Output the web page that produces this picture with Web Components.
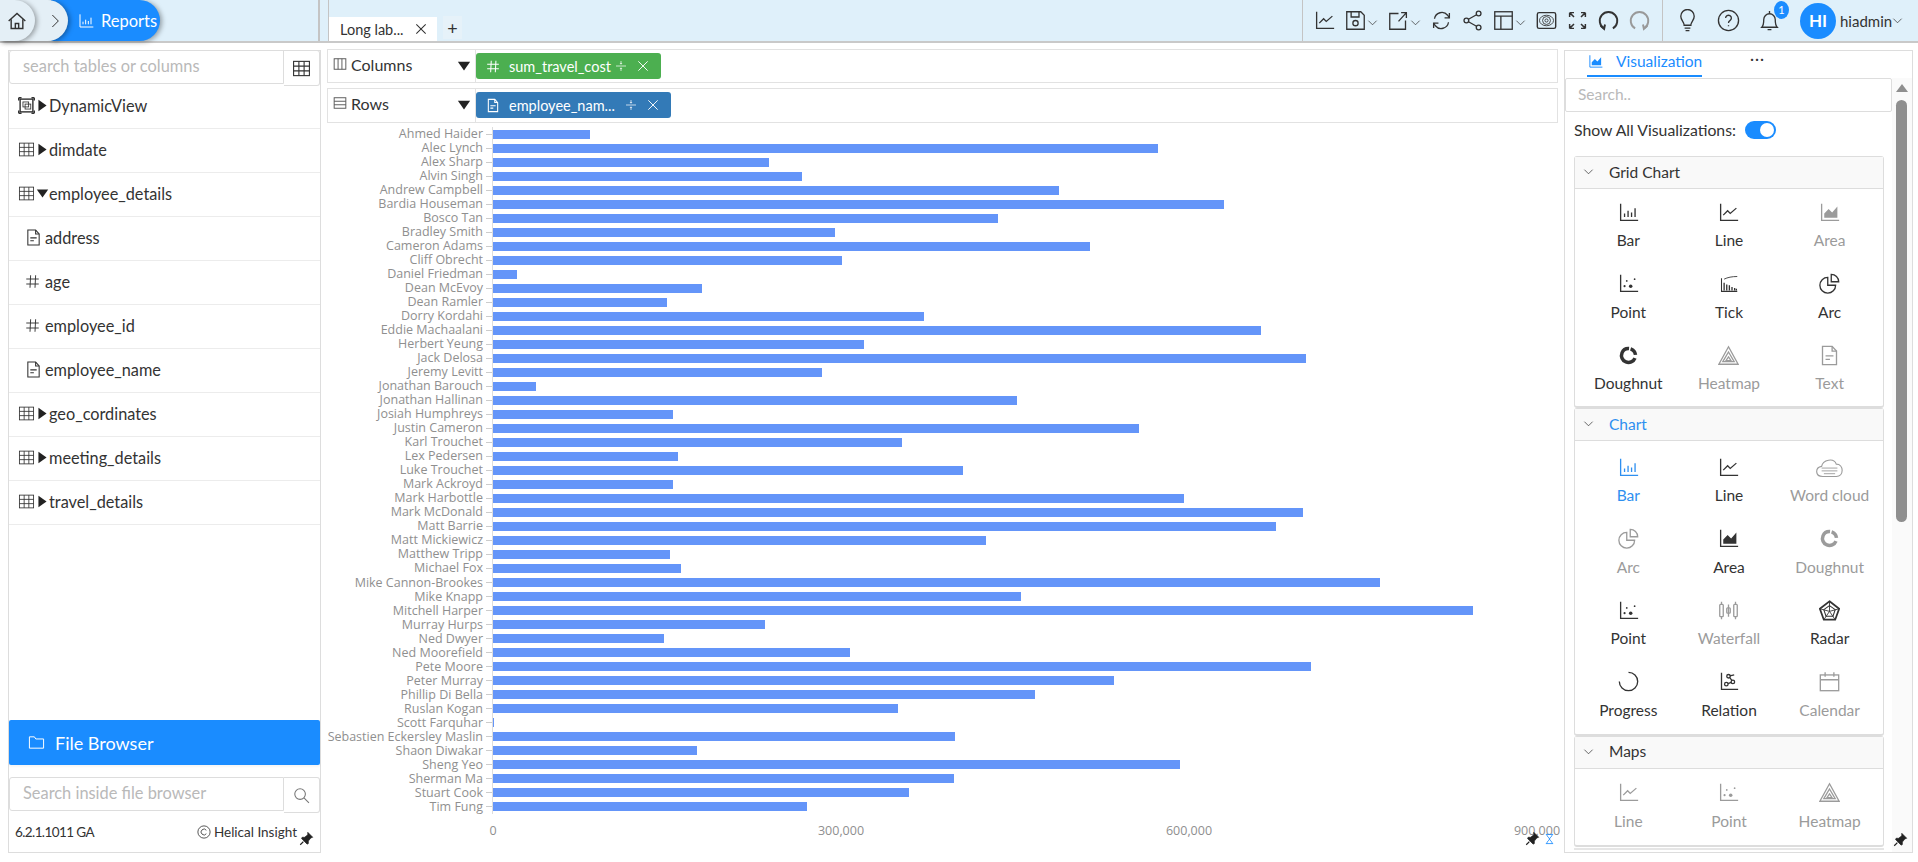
<!DOCTYPE html>
<html lang="en">
<head>
<meta charset="utf-8">
<title>Reports</title>
<style>
  html, body { margin: 0; height: 100%; overflow: hidden; background: #fff; }
  body { font-family: "Lato", "Liberation Sans", sans-serif; color: #333; }
  .shell { display: flex; flex-direction: column; height: 862px; }
  .main { flex: 1; min-height: 0; display: flex; padding: 7px 5px 9px 8px; }
</style>
</head>
<body>
<div class="shell">
  <hi-topbar></hi-topbar>
  <div class="main">
    <field-panel></field-panel>
    <report-canvas></report-canvas>
    <viz-panel></viz-panel>
  </div>
</div>

<script>
const ICONS = {
  home: '<path d="M2 12 12 3l10 9"/><path d="M5 10v11h14V10"/><path d="M10 21v-6h4v6"/>',
  bars: '<path d="M3 2v19h20"/><path d="M7.5 17v-4M11.5 17v-7M15.5 17V12M19.5 17V7"/>',
  line: '<path d="M3 2v19h20"/><path d="M6 15l5-5 3 3 7-6" />',
  area: '<path d="M3 2v19h20"/><path d="M6 18v-5l5-5 4 4 6-7v13z" fill="currentColor" stroke="none"/>',
  point: '<path d="M3 2v19h20"/><circle cx="7.500" cy="15" r="1.200" fill="currentColor" stroke="none"/><circle cx="10" cy="9" r="1" fill="currentColor" stroke="none"/><circle cx="14.500" cy="15" r="2" fill="currentColor" stroke="none"/><circle cx="19" cy="7" r="1" fill="currentColor" stroke="none"/>',
  tick: '<path d="M4 6v15h18" stroke-width="1.200"/><path d="M7 20v-9M10 20v-7M13 20v-6M16 20v-4M19 20v-3M21 20v-2" stroke-width="1.500"/><path d="M7 7c4-2 9-3 15-3" stroke-width="1"/>',
  arc: '<path d="M10 5a9 9 0 1 0 9 9h-9z"/><path d="M14 1.500a8.500 8.500 0 0 1 8.500 8.500H14z"/>',
  doughnut: '<circle cx="12" cy="12" r="8" fill="none" stroke-width="4" stroke-dasharray="35 1.800 9.500 3.900" transform="rotate(22 12 12)"/>',
  heatmap: '<path d="M12 2 23 22H1z"/><path d="M12 8l6.500 11h-13z"/><path d="M12 13.500l3 4.500H9z"/>',
  text: '<path d="M4 1.500h11l5 5.500v15.500H4z"/><path d="M15 1.500V7h5"/><path d="M7.500 12.500h9M7.500 16.500h5"/>',
  cloud: '<path d="M6 20c-7 0-7-8-1-9 1-6 11-8 13-2 7 0 7 11 0 11z" stroke-width="1"/><path d="M5 12.500h14M5 15h14M7 17.500h10" stroke-width=".8"/>',
  waterfall: '<rect x="2" y="5" width="4" height="14" rx="1"/><path d="M4 2v3M4 19v3M12 5v14M20 2v3M20 19v3"/><rect x="10" y="9" width="4" height="6" rx="1"/><rect x="18" y="5" width="4" height="14" rx="1"/>',
  radar: '<path d="M12 1.500 23 10l-4.500 12.500h-13L1 10z" stroke-width="2"/><path d="M12 6.500 18.500 11l-2.500 7.500H8L5.500 11z" stroke-width="1.200"/><path d="M12 1.500V13M1 10l11 3 11-3M5.500 22.500 12 13l6.500 9.500" stroke-width="1"/>',
  progress: '<path d="M12 1.500a10.500 10.500 0 1 1-10.500 10.500"/>',
  relation: '<path d="M4 2v19h19"/><circle cx="9.500" cy="15" r="2"/><circle cx="17" cy="12.500" r="2"/><circle cx="12" cy="6" r="2"/><path d="M11.500 14.500l3.500-1.500M13.500 7.500l2.500 3.500M13.500 5.500l5-1" />',
  calendar: '<rect x="1.500" y="4.500" width="21" height="18"/><path d="M1.500 10h21M7 1.500v5M17 1.500v5"/>',
  table: '<rect x="2" y="3" width="20" height="18"/><path d="M2 9h20M2 15h20M8.700 3v18M15.300 3v18"/>',
  dynamic: '<rect x="3" y="3" width="18" height="18" stroke-width="2"/><rect x="7" y="7" width="8" height="7"/><rect x="10" y="10" width="8" height="7"/><path d="M1 1h4M1 1v4M23 1h-4M23 1v4M1 23h4M1 23v-4M23 23h-4M23 23v-4" stroke-width="2"/>',
  hash: '<path d="M9 2 8 22M17 2l-1 20M2 8h20M2 16h20"/>',
  columns: '<rect x="2" y="3" width="20" height="18"/><path d="M8.700 3v18M15.300 3v18"/>',
  rows: '<rect x="2" y="3" width="20" height="18"/><path d="M2 9h20M2 15h20"/>',
  folder: '<path d="M2 20V4h7l2 3h11v13z"/>',
  search: '<circle cx="10" cy="10" r="7.500"/><path d="M15.500 15.500 22.500 22.500"/>',
  split: '<path d="M2 12h20"/><path d="M12 2v6M12 16v6"/><path d="M10 6l2 2.500L14 6M10 18l2-2.500 2 2.500"/>',
  close: '<path d="M4 4l16 16M20 4 4 20"/>',
  chevron: '<path d="M3 8l9 9 9-9"/>',
  pin: '<path d="M14 2l8 8-3 1-4 5 0 4-2 1-9-9 1-2 4 0 5-4z" fill="currentColor"/><path d="M7 17l-5 5" stroke-width="2"/>',
  glass: '<path d="M4 2h16M4 22h16"/><path d="M6 2c0 5 6 7 6 10 0-3 6-5 6-10M6 22c0-5 6-7 6-10 0 3 6 5 6 10"/>',
  save: '<path d="M2 2h16l4 4v16H2z"/><path d="M7 2v6h9V2"/><circle cx="12" cy="15" r="3"/>',
  share2: '<path d="M12 4H2v18h18V12"/><path d="M12 13 21 3M15 3h6v6"/>',
  refresh: '<path d="M4 10a8.500 8.500 0 0 1 15-4l2 3"/><path d="M21 3.500V9h-5.500"/><path d="M20 14a8.500 8.500 0 0 1-15 4l-2-3"/><path d="M3 20.500V15h5.500"/>',
  share: '<circle cx="19" cy="4" r="2.700"/><circle cx="19" cy="20" r="2.700"/><circle cx="5" cy="12" r="2.700"/><path d="M7.400 10.600 16.600 5.400M7.400 13.400l9.200 5.200"/>',
  layout: '<rect x="2" y="2" width="20" height="20"/><path d="M2 7h20M9 7v15"/>',
  eye: '<rect x="1.500" y="3" width="21" height="18" rx="2" stroke-width="1.600"/><ellipse cx="12" cy="12" rx="8" ry="6" stroke-width="1"/><ellipse cx="12" cy="12" rx="4.500" ry="4.500" stroke-width="1"/><circle cx="12" cy="12" r="1.800" stroke-width="1"/>',
  expand: '<path d="M3 3l5 5M3 3v5M3 3h5M21 3l-5 5M21 3v5M21 3h-5M3 21l5-5M3 21v-5M3 21h5M21 21l-5-5M21 21v-5M21 21h-5" stroke-width="1.700"/>',
  undo: '<path d="M7 21a10 10 0 1 1 10 0" stroke-width="2.200"/><path d="M3 18l4 3.500 1-5" stroke-width="2.200"/>',
  redo: '<path d="M7 21a10 10 0 1 1 10 0" stroke-width="2.200"/><path d="M21 18l-4 3.500-1-5" stroke-width="2.200"/>',
  bulb: '<path d="M8.500 17c0-4-3.500-5-3.500-9.500a7 7 0 0 1 14 0C19 12 15.500 13 15.500 17z"/><path d="M9 20h6M10 22.500h4"/>',
  bell: '<path d="M4 19c2-2 2-4 2-8a6 6 0 0 1 12 0c0 4 0 6 2 8z"/><path d="M10 21.500h4M12 2v3"/>',
  help: '<circle cx="12" cy="12" r="10.500"/><path d="M9 9.500a3 3 0 1 1 4.500 2.600c-1 .6-1.500 1.200-1.500 2.400M12 17v1"/>',
  copyright: '<circle cx="12" cy="12" r="10.500"/><path d="M16 9a5 5 0 1 0 0 6"/>'
};

function icon(name, w, h, sw) {
  return `<svg viewBox="0 0 24 24" width="${w}" height="${h || w}" fill="none" stroke="currentColor" stroke-width="${sw || 1.5}" style="display:block;flex:none" aria-hidden="true">${ICONS[name]}</svg>`;
}

function caret(dir, size) {
  const d = dir === "down" ? "M1 3h14L8 13z" : "M3 1v14l10-7z";
  return `<svg viewBox="0 0 16 16" width="${size}" height="${size}" fill="#222" style="display:block;flex:none" aria-hidden="true"><path d="${d}"/></svg>`;
}

class HiTopbar extends HTMLElement {
  constructor() { super(); this.attachShadow({ mode: "open" }); }
  connectedCallback() {
    const tool = (name, chev, cls) => `<span class="tool ${cls || ""}">${icon(name, 21)}${chev ? `<span class="chev">${icon("chevron", 11, 11, 1.6)}</span>` : ""}</span>`;
    this.shadowRoot.innerHTML = `
      <style>
        :host { display: flex; flex: none; height: 41px; background: #dff0fa; border-bottom: 2px solid #c9c9c9; color: #333; }
        .crumbs { width: 320px; box-sizing: border-box; display: flex; flex: none; height: 41px; border-right: 2px solid #c4c4c4; }
        .crumb { height: 41px; display: flex; align-items: center; box-sizing: border-box; border-radius: 0 21px 21px 0; box-shadow: 2px 1px 5px rgba(0,0,0,.35); }
        .home { width: 35px; padding-left: 7px; background: #e4eff6; position: relative; z-index: 3; border-bottom-right-radius: 21px; }
        .next { width: 68px; margin-left: -35px; padding-left: 47px; background: #e4eff6; position: relative; z-index: 2; }
        .reports { width: 109px; margin-left: -17px; padding-left: 27px; background: #1a8cff; color: #fff; gap: 7px; font-size: 16.500px; z-index: 1; position: relative; }
        .tabs { width: 974px; margin-left: 8px; box-sizing: border-box; flex: none; display: flex; align-items: flex-end; border-left: 1px solid #c4c4c4; }
        .tab { width: 108px; height: 24px; background: #fff; box-sizing: border-box; display: flex; align-items: center; padding-left: 11px; font-size: 14.500px; }
        .tab span { flex: 1; }
        .tab svg { margin-right: 9px; }
        .plus { width: 19px; height: 23px; margin: 0 0 2px 6px; display: flex; align-items: center; justify-content: center; font-size: 18px; background: #e6f2f9; line-height: 1; }
        .tools { width: 361px; box-sizing: border-box; flex: none; display: flex; align-items: center; padding: 0 0 0 11px; border-left: 1px solid #c4c4c4; border-right: 1px solid #c4c4c4; gap: 0; }
        .tool { display: flex; align-items: center; margin-right: 10px; }
        .chev { margin: 3px 0 0 1px; }
        .off { color: #999; }
        .user { flex: 1; display: flex; align-items: center; padding-left: 13px; position: relative; }
        .user .u { display: flex; margin-right: 18px; }
        .user .bell { margin-right: 19px; }
        .badge { position: absolute; left: 111px; top: 1px; width: 15px; height: 18px; border-radius: 50%; background: #1a8cff; color: #fff; font-size: 11px; line-height: 18px; text-align: center; }
        .avatar { width: 36px; height: 36px; border-radius: 50%; background: #1a8cff; color: #fff; font-size: 17px; font-weight: 700; display: flex; align-items: center; justify-content: center; flex: none; margin-right: 4px; }
        .name { font-size: 15px; }
      </style>
      <div class="crumbs">
        <div class="crumb home">${icon("home", 20, 20, 1.7)}</div>
        <div class="crumb next">${icon("chevron", 16, 16, 1.5).replace("<svg ", '<svg transform="rotate(-90)" ')}</div>
        <div class="crumb reports">${icon("bars", 16)}<span>Reports</span></div>
      </div>
      <div class="tabs">
        <div class="tab"><span>Long lab...</span>${icon("close", 14, 14, 1.8)}</div>
        <div class="plus">+</div>
      </div>
      <div class="tools">
        ${tool("line")}${tool("save", true)}${tool("share2", true)}${tool("refresh")}${tool("share")}${tool("layout", true)}${tool("eye")}${tool("expand")}${tool("undo")}${tool("redo", false, "off")}
      </div>
      <div class="user">
        <span class="u">${icon("bulb", 23, 23, 1.4)}</span>
        <span class="u">${icon("help", 23, 23, 1.4)}</span>
        <span class="u bell">${icon("bell", 23, 23, 1.4)}</span>
        <span class="badge">1</span>
        <span class="avatar">HI</span>
        <span class="name">hiadmin</span>${icon("chevron", 11, 11, 1.6)}
      </div>`;
  }
}
customElements.define("hi-topbar", HiTopbar);

class TreeRow extends HTMLElement {
  constructor() { super(); this.attachShadow({ mode: "open" }); }
  connectedCallback() {
    const kind = this.getAttribute("kind");
    const open = this.hasAttribute("open");
    const isField = kind === "text" || kind === "hash";
    const lead = isField
      ? `<span class="f">${icon(kind, kind === "hash" ? 15 : 17, 17, 1.5)}</span>`
      : `${icon(kind, 17, 17, 1.2)}<span class="c">${caret(open ? "down" : "right", 13)}</span>`;
    this.shadowRoot.innerHTML = `
      <style>
        :host { display: flex; align-items: center; height: 44px; box-sizing: border-box; border-bottom: 1px solid #ececec; font-size: 16.300px; color: #333; padding: 0 0 ${isField ? 2 : 3}px ${isField ? 16 : 9}px; }
        .f { width: 20px; flex: none; color: #444; }
        .c { width: 15px; display: flex; justify-content: center; margin-right: -1px; }
        :host svg { color: #333; }
      </style>
      ${lead}<slot></slot>`;
  }
}
customElements.define("tree-row", TreeRow);

class SearchBox extends HTMLElement {
  constructor() { super(); this.attachShadow({ mode: "open" }); }
  connectedCallback() {
    const btn = this.getAttribute("button");
    this.shadowRoot.innerHTML = `
      <style>
        :host { display: flex; height: 34px; flex: none; font-size: 16.400px; color: #b9b9b9; }
        .in { flex: 1; box-sizing: border-box; height: 34px; border: 1px solid #ddd; border-radius: 3px 0 0 3px; padding-left: 13px; line-height: 29px; }
        .btn { width: 36px; height: 36px; box-sizing: border-box; border: 1px solid #ddd; border-left: 0; border-radius: 0 3px 3px 0; display: flex; align-items: center; justify-content: center; color: #333; flex: none; }
        .btn.s { color: #777; }
      </style>
      <div class="in"><slot></slot></div>
      <div class="btn ${btn === "search" ? "s" : ""}">${btn === "search" ? icon("search", 17, 17, 1.5) : icon("table", 19, 19, 1.4)}</div>`;
  }
}
customElements.define("search-box", SearchBox);

class FieldPanel extends HTMLElement {
  constructor() { super(); this.attachShadow({ mode: "open" }); }
  connectedCallback() {
    this.shadowRoot.innerHTML = `
      <style>
        :host { display: flex; flex-direction: column; flex: none; width: 313px; box-sizing: border-box; border: 1px solid #ddd; position: relative; }
        .top { margin: -1px 0 1px; }
        .tree { flex: 1; min-height: 0; }
        .browser { height: 45px; flex: none; background: #1a8cff; color: #fff; border-radius: 2px; display: flex; align-items: center; padding-left: 19px; gap: 10px; font-size: 18px; margin-bottom: 12px; box-shadow: 0 2px 2px rgba(0,0,0,.04); }
        .foot { height: 41px; flex: none; display: flex; align-items: center; justify-content: space-between; padding: 0 23px 0 6px; font-size: 13.500px; color: #333; }
        .ver { letter-spacing: -.6px; }
        .foot .r { display: flex; align-items: center; gap: 3px; }
        .pin { position: absolute; right: 6px; bottom: 6px; color: #222; }
      </style>
      <search-box class="top" button="table">search tables or columns</search-box>
      <div class="tree">
        <tree-row kind="dynamic">DynamicView</tree-row>
        <tree-row kind="table">dimdate</tree-row>
        <tree-row kind="table" open>employee_details</tree-row>
        <tree-row kind="text">address</tree-row>
        <tree-row kind="hash">age</tree-row>
        <tree-row kind="hash">employee_id</tree-row>
        <tree-row kind="text">employee_name</tree-row>
        <tree-row kind="table">geo_cordinates</tree-row>
        <tree-row kind="table">meeting_details</tree-row>
        <tree-row kind="table">travel_details</tree-row>
      </div>
      <div class="browser">${icon("folder", 17, 17, 1.4)}<span>File Browser</span></div>
      <search-box button="search">Search inside file browser</search-box>
      <div class="foot">
        <span class="ver">6.2.1.1011 GA</span>
        <span class="r">${icon("copyright", 14, 14, 1.4)}<span>Helical Insight</span></span>
      </div>
      <span class="pin">${icon("pin", 15, 15, 1)}</span>`;
  }
}
customElements.define("field-panel", FieldPanel);

class ShelfRow extends HTMLElement {
  constructor() { super(); this.attachShadow({ mode: "open" }); }
  connectedCallback() {
    const h = this.getAttribute("h");
    this.shadowRoot.innerHTML = `
      <style>
        :host { display: flex; height: ${h}px; box-sizing: border-box; border: 1px solid #e2e2e2; flex: none; }
        .label { width: 148px; flex: none; box-sizing: border-box; display: flex; align-items: flex-start; padding: 6px 0 0 5px; border-right: 1px solid #e2e2e2; font-size: 16px; color: #333; }
        .label svg { color: #555; margin-right: 4px; margin-top: 1px; }
        .label span { flex: 1; line-height: 18px; }
        .car { margin-top: 2px; }
        .items { display: flex; padding: 3px 0 0 0; }
      </style>
      <div class="label">${icon(this.getAttribute("icon"), 14, 14, 1.6)}<span>${this.getAttribute("label")}</span><i class="car">${caret("down", 14)}</i></div>
      <div class="items"><slot></slot></div>`;
  }
}
customElements.define("shelf-row", ShelfRow);

class FieldPill extends HTMLElement {
  constructor() { super(); this.attachShadow({ mode: "open" }); }
  connectedCallback() {
    this.shadowRoot.innerHTML = `
      <style>
        :host { display: flex; align-items: center; box-sizing: border-box; height: 26px; width: ${this.getAttribute("w")}px; border-radius: 3px; background: ${this.getAttribute("color")}; color: #fff; padding-left: 10px; font-size: 14.500px; }
        span { flex: 1; margin-left: 9px; white-space: nowrap; }
        .a { margin-right: 9px; }
        .b { margin-right: 11px; }
      </style>
      ${icon(this.getAttribute("icon"), 14, 15, 1.8)}<span><slot></slot></span>
      <i class="a">${icon("split", 12, 14, 1.4)}</i><i class="b">${icon("close", 14, 14, 1.6)}</i>`;
  }
}
customElements.define("field-pill", FieldPill);

// plotted bar length in px, 348px = 300,000
const travelCost = [
  ["Ahmed Haider", 97], ["Alec Lynch", 665], ["Alex Sharp", 276], ["Alvin Singh", 309], ["Andrew Campbell", 566],
  ["Bardia Houseman", 731], ["Bosco Tan", 505], ["Bradley Smith", 342], ["Cameron Adams", 597], ["Cliff Obrecht", 349],
  ["Daniel Friedman", 24], ["Dean McEvoy", 209], ["Dean Ramler", 174], ["Dorry Kordahi", 431], ["Eddie Machaalani", 768],
  ["Herbert Yeung", 371], ["Jack Delosa", 813], ["Jeremy Levitt", 329], ["Jonathan Barouch", 43], ["Jonathan Hallinan", 524],
  ["Josiah Humphreys", 180], ["Justin Cameron", 646], ["Karl Trouchet", 409], ["Lex Pedersen", 185], ["Luke Trouchet", 470],
  ["Mark Ackroyd", 180], ["Mark Harbottle", 691], ["Mark McDonald", 810], ["Matt Barrie", 783], ["Matt Mickiewicz", 493],
  ["Matthew Tripp", 177], ["Michael Fox", 188], ["Mike Cannon-Brookes", 887], ["Mike Knapp", 528], ["Mitchell Harper", 980],
  ["Murray Hurps", 272], ["Ned Dwyer", 171], ["Ned Moorefield", 357], ["Pete Moore", 818], ["Peter Murray", 621],
  ["Phillip Di Bella", 542], ["Ruslan Kogan", 405], ["Scott Farquhar", 1], ["Sebastien Eckersley Maslin", 462], ["Shaon Diwakar", 204],
  ["Sheng Yeo", 687], ["Sherman Ma", 461], ["Stuart Cook", 416], ["Tim Fung", 314]
];

class BarChart extends HTMLElement {
  constructor() { super(); this.attachShadow({ mode: "open" }); }
  connectedCallback() {
    const rows = travelCost.map(([name, w]) => `
      <div class="row"><span class="n">${name}</span><i class="t"></i><i class="bar" style="width:${w}px"></i></div>`).join("");
    this.shadowRoot.innerHTML = `
      <style>
        :host { display: block; flex: 1; margin-top: -1px; font-family: "Open Sans", "Liberation Sans", sans-serif; font-size: 12.500px; color: #8f8f8f; position: relative; }
        .rows { display: grid; grid-auto-rows: 14.020px; }
        .row { display: flex; align-items: center; height: 14.020px; white-space: nowrap; }
        .n { width: 156px; text-align: right; flex: none; line-height: 14px; }
        .t { width: 6px; height: 1px; background: #ccc; margin-left: 3px; flex: none; }
        .bar { height: 9px; background: #6495f9; margin-left: 1px; border-left: 0; display: block; flex: none; }
        .rows { background: linear-gradient(#ddd,#ddd) 165px 0 / 1px 100% no-repeat; }
        .axis { display: flex; margin: 8px 0 0 -8px; }
        .axis span { width: 348px; text-align: center; flex: none; }
        .pin { position: absolute; right: 3px; bottom: 7px; display: flex; gap: 4px; align-items: center; }
        .pin b { color: #222; font-weight: 400; }
        .pin i { color: #1a8cff; }
      </style>
      <div class="rows">${rows}</div>
      <div class="axis"><span>0</span><span>300,000</span><span>600,000</span><span>900,000</span></div>
      <div class="pin"><b>${icon("pin", 15, 15, 1)}</b><i>${icon("glass", 11, 14, 1.8)}</i></div>`;
  }
}
customElements.define("bar-chart", BarChart);

class ReportCanvas extends HTMLElement {
  constructor() { super(); this.attachShadow({ mode: "open" }); }
  connectedCallback() {
    this.shadowRoot.innerHTML = `
      <style>
        :host { display: flex; flex-direction: column; flex: none; width: 1231px; margin: -1px 0 0 6px; box-sizing: border-box; gap: 5px; }
      </style>
      <shelf-row h="34" icon="columns" label="Columns"><field-pill w="185" color="#4caf50" icon="hash">sum_travel_cost</field-pill></shelf-row>
      <shelf-row h="35" icon="rows" label="Rows"><field-pill w="195" color="#337ab7" icon="text">employee_nam...</field-pill></shelf-row>
      <bar-chart></bar-chart>`;
  }
}
customElements.define("report-canvas", ReportCanvas);

class VizItem extends HTMLElement {
  constructor() { super(); this.attachShadow({ mode: "open" }); }
  connectedCallback() {
    const state = this.getAttribute("state");
    const color = state === "off" ? "#9b9b9b" : state === "on" ? "#2e8ff0" : "#333";
    const size = this.getAttribute("size") || 21;
    this.shadowRoot.innerHTML = `
      <style>
        :host { display: flex; flex-direction: column; align-items: center; height: 48px; color: ${color}; font-size: 15.500px; }
        .i { height: 22px; display: flex; align-items: center; justify-content: center; margin-bottom: 8px; }
        .l { line-height: 18px; white-space: nowrap; }
      </style>
      <div class="i">${icon(this.getAttribute("icon"), size, size, 1.5)}</div>
      <div class="l"><slot></slot></div>`;
  }
}
customElements.define("viz-item", VizItem);

class VizSection extends HTMLElement {
  constructor() { super(); this.attachShadow({ mode: "open" }); }
  connectedCallback() {
    this.shadowRoot.innerHTML = `
      <style>
        :host { display: block; box-sizing: border-box; border: 1px solid #ddd; border-bottom-width: 2px; border-radius: 3px; font-size: 15.500px; color: #333; }
        .h { height: 32px; box-sizing: border-box; display: flex; align-items: center; background: #f9f9f9; border-bottom: 1px solid #ddd; padding: 0 0 2px 8px; gap: 15px; }
        .h.accent span { color: #2e8ff0; }
        .g { display: grid; grid-template-columns: repeat(3, 1fr); row-gap: 23.500px; padding: ${this.getAttribute("pt")}px 3px ${this.getAttribute("pb")}px; }
      </style>
      <div class="h ${this.hasAttribute("accent") ? "accent" : ""}">${icon("chevron", 11, 11, 1.6)}<span>${this.getAttribute("title")}</span></div>
      <div class="g"><slot></slot></div>`;
  }
}
customElements.define("viz-section", VizSection);

class VizPanel extends HTMLElement {
  constructor() { super(); this.attachShadow({ mode: "open" }); }
  connectedCallback() {
    this.shadowRoot.innerHTML = `
      <style>
        :host { display: flex; flex-direction: column; flex: none; width: 349px; margin-left: 6px; box-sizing: border-box; border: 1px solid #ddd; position: relative; overflow: hidden; font-size: 15.500px; color: #333; }
        .tabs { display: flex; height: 27px; flex: none; align-items: flex-start; padding-left: 22px; }
        .tab { display: flex; width: 115px; height: 26px; box-sizing: border-box; align-items: center; border-bottom: 2px solid #1a8cff; color: #1a8cff; gap: 13px; padding: 0 0 4px 1px; }
        .more { margin: -2px 0 0 48px; letter-spacing: 1px; }
        .body { display: flex; flex: 1; min-height: 0; }
        .col { width: 327px; flex: none; display: flex; flex-direction: column; height: 100%; }
        .find { height: 34px; flex: none; box-sizing: border-box; border: 1px solid #ddd; border-radius: 2px; color: #b9b9b9; padding-left: 12px; line-height: 30px; }
        .show { display: flex; align-items: center; height: 33px; padding-left: 9px; gap: 9px; flex: none; margin-top: 1px; font-size: 15.800px; }
        .tog { width: 31px; height: 18px; border-radius: 9px; background: #1a8cff; position: relative; display: block; }
        .tog::after { content: ""; position: absolute; right: 2px; top: 2px; width: 14px; height: 14px; border-radius: 50%; background: #fff; }
        .secs { margin: 10px 8px 0 9px; }
        .end { height: 0; margin: 1px 8px 0 9px; border-top: 2px solid #e6e6e6; }
        .track { flex: 1; background: #fafafa; display: flex; flex-direction: column; align-items: center; padding: 6px 1px 0 0; }
        .up { width: 0; height: 0; border: 6px solid transparent; border-top: 0; border-bottom: 8px solid #8f8f8f; flex: none; }
        .thumb { width: 11px; height: 422px; background: #8f8f8f; border-radius: 6px; margin-top: 8px; flex: none; }
        .pin { position: absolute; right: 4px; bottom: 5px; color: #222; }
      </style>
      <div class="tabs">
        <div class="tab">${icon("area", 15, 15, 1.5)}<span>Visualization</span></div>
        <span class="more">&middot;&middot;&middot;</span>
      </div>
      <div class="body">
        <div class="col">
          <div class="find">Search..</div>
          <div class="show"><span>Show All Visualizations:</span><i class="tog"></i></div>
          <div class="secs"><slot></slot></div>
          <div class="end"></div>
        </div>
        <div class="track"><i class="up"></i><i class="thumb"></i></div>
      </div>
      <span class="pin">${icon("pin", 15, 15, 1)}</span>`;
    this.innerHTML = `
      <viz-section title="Grid Chart" pt="12" pb="14">
        <viz-item icon="bars">Bar</viz-item><viz-item icon="line">Line</viz-item><viz-item icon="area" state="off">Area</viz-item>
        <viz-item icon="point">Point</viz-item><viz-item icon="tick">Tick</viz-item><viz-item icon="arc">Arc</viz-item>
        <viz-item icon="doughnut">Doughnut</viz-item><viz-item icon="heatmap" state="off">Heatmap</viz-item><viz-item icon="text" state="off">Text</viz-item>
      </viz-section>
      <viz-section title="Chart" accent pt="15" pb="15">
        <viz-item icon="bars" state="on">Bar</viz-item><viz-item icon="line">Line</viz-item><viz-item icon="cloud" size="27" state="off">Word cloud</viz-item>
        <viz-item icon="arc" state="off">Arc</viz-item><viz-item icon="area">Area</viz-item><viz-item icon="doughnut" state="off">Doughnut</viz-item>
        <viz-item icon="point">Point</viz-item><viz-item icon="waterfall" state="off">Waterfall</viz-item><viz-item icon="radar">Radar</viz-item>
        <viz-item icon="progress">Progress</viz-item><viz-item icon="relation">Relation</viz-item><viz-item icon="calendar" state="off">Calendar</viz-item>
      </viz-section>
      <viz-section title="Maps" pt="13" pb="15">
        <viz-item icon="line" state="off">Line</viz-item><viz-item icon="point" state="off">Point</viz-item><viz-item icon="heatmap" state="off">Heatmap</viz-item>
      </viz-section>`;
  }
}
customElements.define("viz-panel", VizPanel);
</script>
</body>
</html>
